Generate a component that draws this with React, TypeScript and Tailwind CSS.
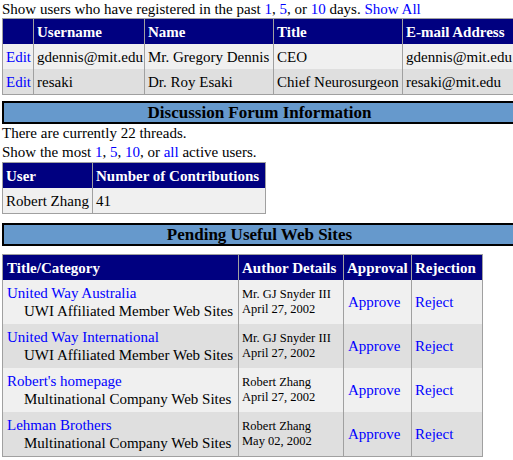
import React from 'react';

const users = [
  { username: 'gdennis@mit.edu', name: 'Mr. Gregory Dennis', title: 'CEO', email: 'gdennis@mit.edu' },
  { username: 'resaki', name: 'Dr. Roy Esaki', title: 'Chief Neurosurgeon', email: 'resaki@mit.edu' },
];

const sites = [
  { title: 'United Way Australia', category: 'UWI Affiliated Member Web Sites', author: 'Mr. GJ Snyder III', date: 'April 27, 2002' },
  { title: 'United Way International', category: 'UWI Affiliated Member Web Sites', author: 'Mr. GJ Snyder III', date: 'April 27, 2002' },
  { title: "Robert's homepage", category: 'Multinational Company Web Sites', author: 'Robert Zhang', date: 'April 27, 2002' },
  { title: 'Lehman Brothers', category: 'Multinational Company Web Sites', author: 'Robert Zhang', date: 'May 02, 2002' },
];

const rowBg = (i: number) => (i % 2 === 0 ? 'bg-[#f0f0f0]' : 'bg-[#dfdfdf]');

const Link: React.FC<{ children: React.ReactNode }> = ({ children }) => (
  <a className="text-[#0000ff] cursor-pointer">{children}</a>
);

const Th: React.FC<{ children?: React.ReactNode }> = ({ children }) => (
  <div className="bg-[#000080] text-white font-bold h-[25px] flex items-center px-[3px] whitespace-nowrap">{children}</div>
);

const Bar: React.FC<{ title: string; className?: string }> = ({ title, className }) => (
  <div className={`w-[515px] h-[23px] border-2 border-black bg-[#6699cc] text-center font-bold text-[17px] leading-[19px] ${className ?? ''}`}>
    {title}
  </div>
);

export default function App() {
  return (
    <div className="w-[513px] h-[460px] overflow-hidden bg-white text-black font-['Liberation_Serif','Times_New_Roman',serif] text-[15px] leading-[18px]">
      <div className="w-[520px] pl-[2px]">
        <p className="h-[18px] whitespace-nowrap">
          Show users who have registered in the past <Link>1</Link>, <Link>5</Link>, or <Link>10</Link> days. <Link>Show All</Link>
        </p>

        {/* Users table */}
        <div className="grid grid-cols-[30px_110px_128px_128px_113px] gap-x-px bg-[#a0a0a0] border border-[#a0a0a0] w-max">
          <Th />
          <Th>Username</Th>
          <Th>Name</Th>
          <Th>Title</Th>
          <Th>E-mail Address</Th>
          {users.map((u, i) => (
            <React.Fragment key={u.username}>
              <div className={`${rowBg(i)} h-[25px] flex items-center px-[3px]`}><Link>Edit</Link></div>
              <div className={`${rowBg(i)} h-[25px] flex items-center px-[3px] whitespace-nowrap`}>{u.username}</div>
              <div className={`${rowBg(i)} h-[25px] flex items-center px-[3px] whitespace-nowrap`}>{u.name}</div>
              <div className={`${rowBg(i)} h-[25px] flex items-center px-[3px] whitespace-nowrap`}>{u.title}</div>
              <div className={`${rowBg(i)} h-[25px] flex items-center px-[3px] whitespace-nowrap`}>{u.email}</div>
            </React.Fragment>
          ))}
        </div>

        <Bar title="Discussion Forum Information" className="mt-[6px]" />
        <div className="leading-[19px] whitespace-nowrap">
          <p>There are currently 22 threads.</p>
          <p>
            Show the most <Link>1</Link>, <Link>5</Link>, <Link>10</Link>, or <Link>all</Link> active users.
          </p>
        </div>

        {/* Contributions table */}
        <div className="grid grid-cols-[89px_172px] gap-x-px bg-[#a0a0a0] border border-[#a0a0a0] w-max">
          <Th>User</Th>
          <Th>Number of Contributions</Th>
          <div className="bg-[#f0f0f0] h-[25px] flex items-center px-[3px] whitespace-nowrap">Robert Zhang</div>
          <div className="bg-[#f0f0f0] h-[25px] flex items-center px-[3px]">41</div>
        </div>

        <Bar title="Pending Useful Web Sites" className="mt-[9px]" />

        {/* Pending sites table */}
        <div className="mt-[8px] grid grid-cols-[235px_104px_67px_70px] gap-x-px bg-[#a0a0a0] border border-[#a0a0a0] w-max">
          <Th><span className="pl-px">Title/Category</span></Th>
          <Th>Author Details</Th>
          <Th>Approval</Th>
          <Th>Rejection</Th>
          {sites.map((s, i) => (
            <React.Fragment key={s.title}>
              <div className={`${rowBg(i)} h-[44px] flex flex-col justify-center px-[4px] whitespace-nowrap`}>
                <Link>{s.title}</Link>
                <span className="pl-[17px]">{s.category}</span>
              </div>
              <div className={`${rowBg(i)} h-[44px] flex flex-col justify-center px-[3px] text-[12.5px] leading-[15px] whitespace-nowrap`}>
                <span>{s.author}</span>
                <span>{s.date}</span>
              </div>
              <div className={`${rowBg(i)} h-[44px] flex items-center px-[4px]`}><Link>Approve</Link></div>
              <div className={`${rowBg(i)} h-[44px] flex items-center px-[3px]`}><Link>Reject</Link></div>
            </React.Fragment>
          ))}
        </div>
      </div>
    </div>
  );
}
